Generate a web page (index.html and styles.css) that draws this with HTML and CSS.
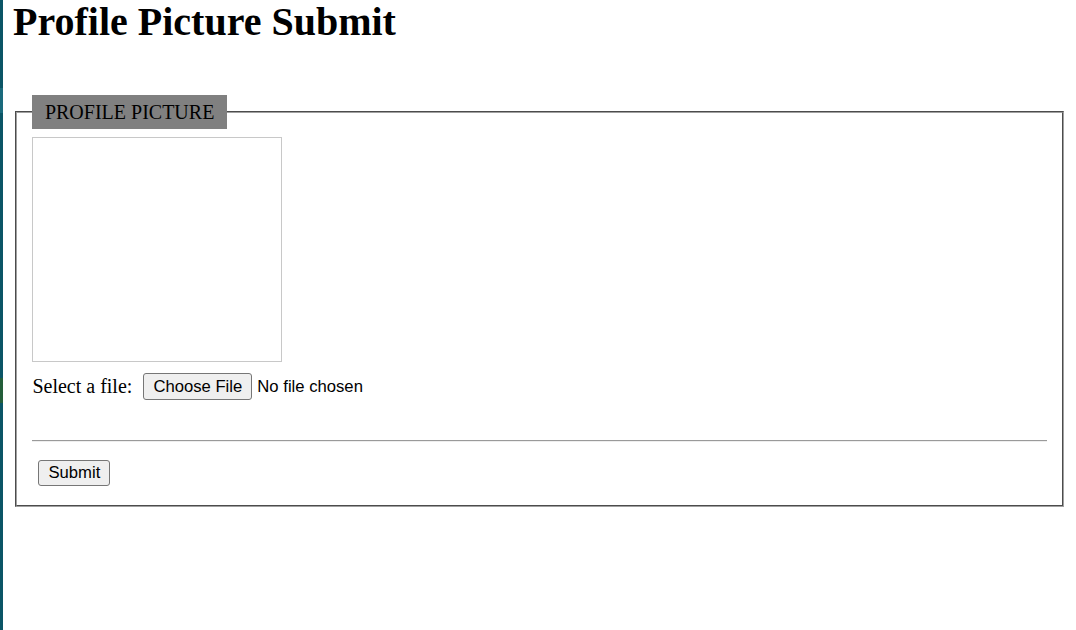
FILE: index.html
```html
<!DOCTYPE html>
<html lang="en">
<head>
<meta charset="utf-8">
<title>Profile Picture Submit</title>
<link rel="stylesheet" href="styles.css">
</head>
<body>
<div class="strip"></div>
<main class="page">
  <h1 class="title">Profile Picture Submit</h1>
  <form class="form">
    <fieldset class="box">
      <legend class="legend">PROFILE PICTURE</legend>
      <div class="preview"></div>
      <div class="file-row">
        <label class="file-label">Select a file:</label>
        <span class="file-input">
          <button type="button" class="btn file-btn">Choose File</button>
          <span class="file-status">No file chosen</span>
        </span>
      </div>
      <hr class="rule">
      <div class="actions">
        <button type="submit" class="btn submit-btn">Submit</button>
      </div>
    </fieldset>
  </form>
</main>
</body>
</html>
```

FILE: styles.css
```css
html, body {
  margin: 0;
  padding: 0;
  background: #ffffff;
}

body {
  display: flex;
  min-height: 630px;
  font-family: "Liberation Serif", "Times New Roman", serif;
  font-size: 20px;
  color: #000;
}

.strip {
  width: 3px;
  flex: none;
  background: linear-gradient(#0b5566 0 14%, #1a6a7c 14% 18%, #0b5566 18% 60%, #235e3a 60% 64%, #0b5566 64% 100%);
}

.page {
  flex: 1;
  padding: 0 10px 0 10px;
}

.title {
  margin: 0;
  font-size: 40px;
  font-weight: bold;
  line-height: 44px;
}

.form {
  margin-top: 51px;
}

.box {
  margin: 0 2px;
  padding: 7px 15px 13px 15.4px;
  border: 2px groove #a0a0a0;
}

.legend {
  background: #808080;
  padding: 6px 12.5px;
  line-height: 22px;
  font-size: 20px;
}

.preview {
  width: 248px;
  height: 223px;
  border: 1px solid #c8c8c8;
  margin-top: 1px;
}

.file-row {
  display: flex;
  align-items: center;
  margin-top: 11px;
  height: 27px;
}

.file-label {
  margin-right: 11px;
}

.file-input {
  display: flex;
  align-items: center;
  font-family: "Liberation Sans", Arial, sans-serif;
  font-size: 16.67px;
}

.btn {
  font-family: "Liberation Sans", Arial, sans-serif;
  font-size: 16.67px;
  color: #000;
  background: #efefef;
  border: 1px solid #767676;
  border-radius: 3px;
  padding: 0;
  margin: 0;
}

.file-btn {
  height: 27px;
  width: 109px;
  margin-right: 5px;
}

.rule {
  margin: 40px 0 0;
  border: 0;
  border-top: 1px solid #9a9a9a;
  border-bottom: 1px solid #eeeeee;
  height: 0;
}

.actions {
  margin-top: 18px;
  padding-left: 6px;
  padding-bottom: 6px;
}

.submit-btn {
  height: 26px;
  width: 72px;
}
```
